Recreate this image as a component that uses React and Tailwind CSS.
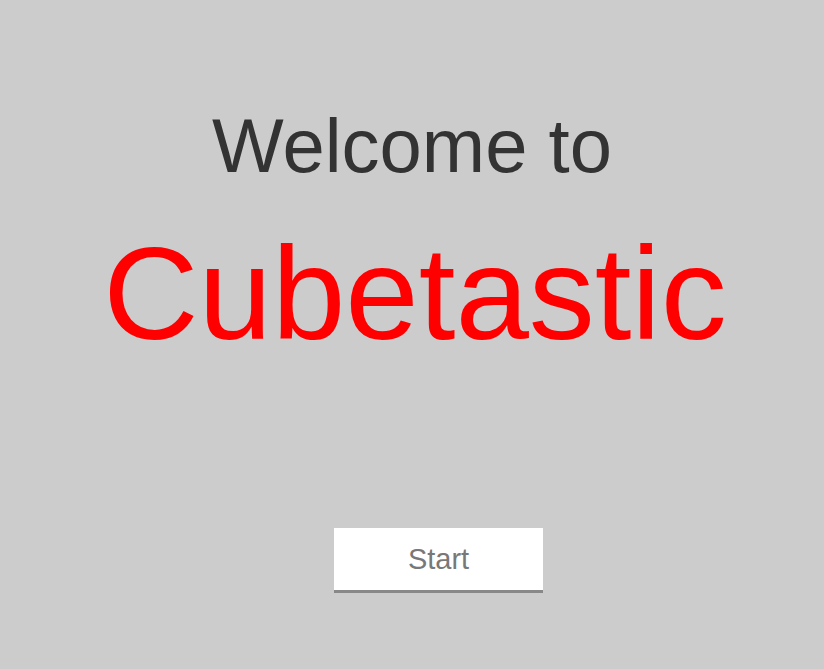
import React from 'react'

const App = () => {
  return (
    <div className="min-h-[669px] w-full bg-[#cccccc] flex flex-col items-center font-['Liberation_Sans',Arial,sans-serif]">
      <h2 className="mt-[108px] text-[76px] leading-none text-[#333333]">Welcome to</h2>
      <h1 className="mt-[44px] ml-[6px] text-[132px] leading-none text-[#ff0000]">Cubetastic</h1>
      <button className="mt-[168px] ml-[53px] w-[209px] h-[65px] bg-white border-b-[3px] border-[#888888] text-[29px] text-[#787878] leading-none">
        Start
      </button>
    </div>
  )
}

export default App
